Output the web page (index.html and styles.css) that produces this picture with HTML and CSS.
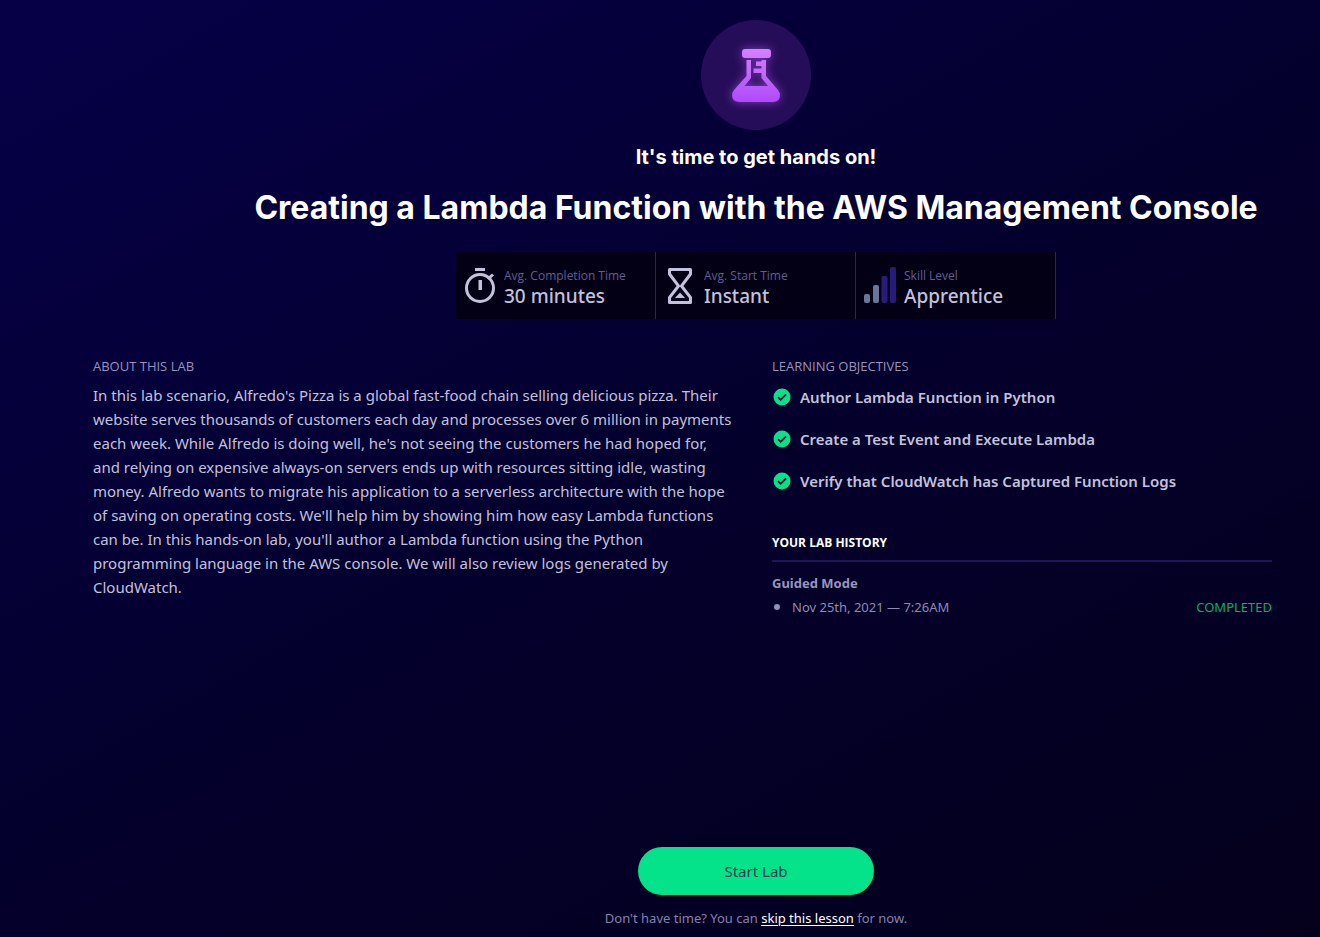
FILE: index.html
```html
<!DOCTYPE html>
<html lang="en">
<head>
<meta charset="utf-8">
<meta name="viewport" content="width=device-width, initial-scale=1">
<title>Creating a Lambda Function with the AWS Management Console</title>
<link rel="stylesheet" href="styles.css">
</head>
<body>
<main class="page">
  <header class="hero">
    <div class="badge">
      <svg class="flask" viewBox="0 0 110 110" aria-hidden="true">
        <defs>
          <linearGradient id="glow" gradientUnits="userSpaceOnUse" x1="0" y1="28" x2="0" y2="83">
            <stop offset="0" stop-color="#d582fb"/>
            <stop offset="1" stop-color="#ae49fd"/>
          </linearGradient>
        </defs>
        <g fill="url(#glow)">
          <rect x="41" y="29" width="29" height="9" rx="3"/>
          <path fill-rule="evenodd" d="M45.500 40H50V58L43.500 66H67L60.500 58V53H52.500V48.500H60.500V46H55V41.500H60.500V40H65V56L77 70Q79 73 79 75Q79 82 72 82H38.500Q31 82 31 75Q31 72 33.500 69.500L45.500 56Z"/>
        </g>
      </svg>
    </div>
    <p class="tagline">It's time to get hands on!</p>
    <h1 class="title">Creating a Lambda Function with the AWS Management Console</h1>
    <dl class="stats">
      <div class="stat">
        <svg class="stat-icon" viewBox="0 0 32 40" aria-hidden="true">
          <circle cx="16" cy="22" r="13.500" fill="none" stroke="#c3c1dc" stroke-width="3"/>
          <path d="M11 2H21V5H11ZM14.500 14H18V24H14.500Z" fill="#c3c1dc"/>
          <path d="M24 13L29 8.500" stroke="#c3c1dc" stroke-width="3"/>
        </svg>
        <div><dt class="stat-label">Avg. Completion Time</dt><dd class="stat-value">30 minutes</dd></div>
      </div>
      <div class="stat">
        <svg class="stat-icon" viewBox="0 0 32 40" aria-hidden="true">
          <path d="M5.500 3.500H26.500V8L17.500 20L26.500 31.500V36.500H5.500V31.500L14.500 20L5.500 8Z" fill="none" stroke="#c3c1dc" stroke-width="3" stroke-linejoin="round"/>
          <path d="M16 26.500L21 32H11Z" fill="#c3c1dc"/>
        </svg>
        <div><dt class="stat-label">Avg. Start Time</dt><dd class="stat-value">Instant</dd></div>
      </div>
      <div class="stat">
        <svg class="stat-icon" viewBox="0 0 32 40" aria-hidden="true">
          <g fill="#6b7597"><rect x="0" y="28" width="6" height="9" rx="2"/><rect x="9" y="19" width="6" height="18" rx="2"/></g>
          <g fill="#281c7b"><rect x="17.500" y="10" width="6" height="27" rx="2"/><rect x="26" y="1" width="6" height="36" rx="2"/></g>
        </svg>
        <div><dt class="stat-label">Skill Level</dt><dd class="stat-value">Apprentice</dd></div>
      </div>
    </dl>
  </header>

  <div class="columns">
    <section>
      <h2 class="section-title">ABOUT THIS LAB</h2>
      <p class="about">In this lab scenario, Alfredo's Pizza is a global fast-food chain selling delicious pizza. Their website serves thousands of customers each day and processes over 6 million in payments each week. While Alfredo is doing well, he's not seeing the customers he had hoped for, and relying on expensive always-on servers ends up with resources sitting idle, wasting money. Alfredo wants to migrate his application to a serverless architecture with the hope of saving on operating costs. We'll help him by showing him how easy Lambda functions can be. In this hands-on lab, you'll author a Lambda function using the Python programming language in the AWS console. We will also review logs generated by CloudWatch.</p>
    </section>
    <div>
      <section>
        <h2 class="section-title">LEARNING OBJECTIVES</h2>
        <ul class="objectives">
          <li class="objective"><svg class="check" viewBox="0 0 20 20" aria-hidden="true"><circle cx="10" cy="10" r="8.500" fill="#04e38a"/><path d="M6 10.200L8.700 12.800L14 7.300" fill="none" stroke="#04002c" stroke-width="1.800"/></svg>Author Lambda Function in Python</li>
          <li class="objective"><svg class="check" viewBox="0 0 20 20" aria-hidden="true"><circle cx="10" cy="10" r="8.500" fill="#04e38a"/><path d="M6 10.200L8.700 12.800L14 7.300" fill="none" stroke="#04002c" stroke-width="1.800"/></svg>Create a Test Event and Execute Lambda</li>
          <li class="objective"><svg class="check" viewBox="0 0 20 20" aria-hidden="true"><circle cx="10" cy="10" r="8.500" fill="#04e38a"/><path d="M6 10.200L8.700 12.800L14 7.300" fill="none" stroke="#04002c" stroke-width="1.800"/></svg>Verify that CloudWatch has Captured Function Logs</li>
        </ul>
      </section>
      <section>
        <h2 class="section-title history-title">YOUR LAB HISTORY</h2>
        <h3 class="mode">Guided Mode</h3>
        <ul class="history">
          <li class="entry"><span class="when">Nov 25th, 2021 — 7:26AM</span><span class="status">COMPLETED</span></li>
        </ul>
      </section>
    </div>
  </div>

  <footer class="actions">
    <button class="start" type="button">Start Lab</button>
    <p class="skip">Don't have time? You can <a class="skip-link" href="#skip">skip this lesson</a> for now.</p>
  </footer>
</main>
</body>
</html>
```
FILE: styles.css
```css
* { box-sizing: border-box; }

body {
  margin: 0;
  color: #c3c1dc;
  background: #03001c;
  font-family: "Noto Sans", "Open Sans", sans-serif;
  font-size: 15px;
  line-height: 24px;
}

h1, h2, h3, p, ul, dl, dd { margin: 0; padding: 0; }
ul { list-style: none; }

.page {
  display: flex;
  flex-direction: column;
  min-height: 100vh;
  padding: 20px 48px 7px 93px;
  background: linear-gradient(150deg, #060048 0%, #04002d 50%, #04001c 100%);
}

.hero, .actions {
  display: flex;
  flex-direction: column;
  align-items: center;
  padding-left: 147px;
}

.badge {
  width: 110px;
  height: 110px;
  border-radius: 50%;
  background: #260d59;
}

.flask {
  display: block;
  filter: drop-shadow(0 0 5px rgba(190, 90, 255, 0.6));
}

.tagline, .title {
  font-family: Inter, sans-serif;
  font-weight: 700;
  color: #fff;
  text-align: center;
}

.tagline { margin-top: 15px; font-size: 20px; }
.title { margin-top: 19px; font-size: 32px; line-height: 40px; }

.stats { display: flex; margin-top: 24px; }

.stat {
  display: flex;
  align-items: center;
  gap: 8px;
  width: 200px;
  height: 67px;
  padding: 0 8px;
  background: #030016;
  border-right: 1px solid #2b2658;
}

.stat-icon { width: 32px; height: 40px; }

.stat-label {
  margin-top: 4px;
  font-family: "Open Sans", sans-serif;
  font-size: 12px;
  line-height: 16px;
  font-weight: 500;
  color: #625d8e;
}

.stat-value { font-size: 19px; line-height: 24px; font-weight: 500; }

.columns {
  display: grid;
  grid-template-columns: 639fr 500fr;
  gap: 40px;
  margin-top: 37px;
}

.section-title {
  font-family: "Open Sans", sans-serif;
  font-size: 13px;
  line-height: 20px;
  font-weight: 500;
  color: #9893bb;
}

.about { margin-top: 7px; }
.objectives { margin-top: 9px; }

.objective {
  display: flex;
  align-items: center;
  gap: 8px;
  margin-bottom: 18px;
  font-weight: 600;
}

.check { width: 20px; height: 20px; flex: none; }

.history-title {
  margin-top: 40px;
  padding-bottom: 7px;
  border-bottom: 2px solid #1e1657;
  font-size: 12px;
  font-weight: 700;
  color: #fff;
}

.mode { margin-top: 9px; font-size: 13px; font-weight: 700; color: #9a95bc; }

.entry {
  display: flex;
  align-items: center;
  font-size: 13px;
  color: #8f8ab4;
}

.entry::before {
  content: "";
  width: 6px;
  height: 6px;
  margin: 0 12px 0 2px;
  border-radius: 50%;
  background: #8d92bb;
}

.status { margin-left: auto; color: #04ae6c; }

.actions { margin-top: auto; }

.start {
  width: 236px;
  height: 48px;
  border: 0;
  border-radius: 24px;
  background: #04e38a;
  color: #123f4c;
  font: inherit;
}

.skip { margin-top: 11px; font-size: 13px; color: #8781ac; }
.skip-link { color: #fff; text-underline-offset: 2px; }
```
